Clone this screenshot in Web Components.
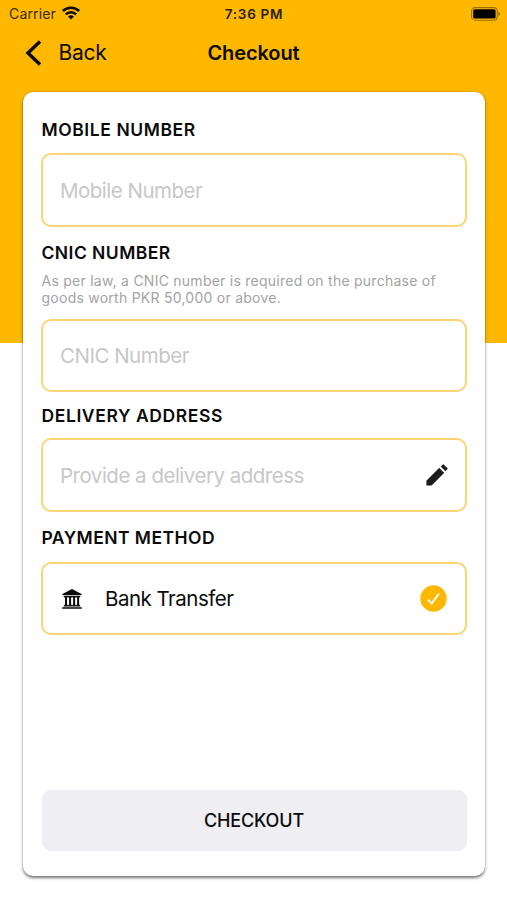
<!DOCTYPE html>
<html lang="en">
<head>
<meta charset="utf-8">
<title>Checkout</title>
<style>
    body {
        margin: 0;
        background: #fff;
        color: #0b0b0b;
        font-family: Inter, "Liberation Sans", sans-serif;
    }
</style>
</head>
<body>
<checkout-screen>
    <status-bar slot="header" carrier="Carrier" time="7:36 PM"></status-bar>
    <nav-header slot="header" back="Back">Checkout</nav-header>

    <form-field label="MOBILE NUMBER" style="--spacing: 0.58px">
        <text-box placeholder="Mobile Number" style="--nudge: 1px"></text-box>
    </form-field>
    <form-field label="CNIC NUMBER" style="--top: 14.5px">
        <span slot="hint">As per law, a CNIC number is required on the purchase of goods worth PKR 50,000 or above.</span>
        <text-box placeholder="CNIC Number"></text-box>
    </form-field>
    <form-field label="DELIVERY ADDRESS" style="--top: 12px; --gap: 12px; --spacing: 0.6px">
        <text-box placeholder="Provide a delivery address" style="--nudge: 1px"><app-icon name="pencil"></app-icon></text-box>
    </form-field>
    <form-field label="PAYMENT METHOD" style="--top: 14.5px">
        <payment-option>Bank Transfer</payment-option>
    </form-field>

    <submit-button slot="footer">CHECKOUT</submit-button>
</checkout-screen>

<script>
const ICONS = {
    wifi: `<svg width="18" height="14" viewBox="0 0 18 14" fill="none" stroke="#0b0b0b" stroke-width="2.6">
        <path d="M.9 5a11.6 11.6 0 0 1 16.2 0"/>
        <path d="M3.8 8.4a7.4 7.4 0 0 1 10.4 0"/>
        <path d="M9 13.6 6 10.6a4.3 4.3 0 0 1 6 0z" fill="#0b0b0b" stroke="none"/>
    </svg>`,
    battery: `<svg width="30" height="14" viewBox="0 0 30 14">
        <rect x=".6" y=".6" width="25.6" height="12.6" rx="3.4" fill="none" stroke="#000" stroke-opacity=".4" stroke-width="1.1"/>
        <rect x="2.2" y="2.2" width="22.4" height="9.4" rx="1.6" fill="#000"/>
        <path d="M27.4 4.8c2.4.9 2.4 3.3 0 4.2z" fill="#000" fill-opacity=".4"/>
    </svg>`,
    back: `<svg width="17" height="26" viewBox="0 0 17 26" fill="none" stroke="#0b0b0b" stroke-width="3.4">
        <path d="M15 1.6 3 13 15 24.4"/>
    </svg>`,
    pencil: `<svg width="22" height="22" viewBox="0 0 22 22" fill="#1d1d1f" stroke="#1d1d1f" stroke-width="1.2" stroke-linejoin="round">
        <path d="M1 21V16.8L13.2 4.6l4.2 4.2L5.2 21z"/>
        <path d="m15.6 2.6 1.7-1.7 3.8 3.8-1.7 1.7z"/>
    </svg>`,
    bank: `<svg width="20" height="20" viewBox="0 0 20 20" fill="#0b0b0b">
        <path d="M10 0 19.6 5v1.3H.4V5z"/>
        <path d="M1.8 7h16.4v1H1.8zM1.8 16.2h16.4v1.2H1.8zM.2 18.3h19.6v1.5H.2z"/>
        <path d="M2.4 7.5h3.2v.9l-.6.5v6.4l.6.6v.8H2.4v-.8l.6-.6V8.9l-.6-.5zM6.5 7.5h3.2v.9l-.6.5v6.4l.6.6v.8H6.5v-.8l.6-.6V8.9l-.6-.5zM10.5 7.5h3.2v.9l-.6.5v6.4l.6.6v.8h-3.2v-.8l.6-.6V8.9l-.6-.5zM14.5 7.5h3.2v.9l-.6.5v6.4l.6.6v.8h-3.2v-.8l.6-.6V8.9l-.6-.5z"/>
    </svg>`,
    check: `<svg width="27" height="27" viewBox="0 0 27 27" fill="none">
        <circle cx="13.5" cy="13.5" r="13.2" fill="#ffb800"/>
        <path d="m7.8 14.4 3.9 4.2 7.2-10" stroke="#fff" stroke-width="1.9"/>
    </svg>`
};

class AppIcon extends HTMLElement {
    connectedCallback() {
        this.attachShadow({ mode: 'open' });
        this.shadowRoot.innerHTML = `
            <style>
                :host { display: block; flex: none; }
                svg { display: block; }
            </style>
            ${ICONS[this.getAttribute('name')]}
        `;
    }
}

class StatusBar extends HTMLElement {
    connectedCallback() {
        this.attachShadow({ mode: 'open' });
        this.shadowRoot.innerHTML = `
            <style>
                :host {
                    display: grid;
                    grid-template-columns: 1fr auto 1fr;
                    align-items: center;
                    height: 27px;
                    padding: 0 6px 0 9px;
                    font-size: 14px;
                }
                .carrier {
                    display: flex;
                    align-items: center;
                    gap: 6px;
                    color: #3a2c05;
                    letter-spacing: 0.15px;
                }
                .carrier app-icon { margin-top: -2px; }
                .time {
                    font-weight: 600;
                    font-size: 13.5px;
                    color: #2a2005;
                    letter-spacing: 0.7px;
                    margin-right: 2px;
                }
                .battery { justify-self: end; }
            </style>
            <div class="carrier"><span>${this.getAttribute('carrier')}</span><app-icon name="wifi"></app-icon></div>
            <div class="time">${this.getAttribute('time')}</div>
            <app-icon class="battery" name="battery"></app-icon>
        `;
    }
}

class NavHeader extends HTMLElement {
    connectedCallback() {
        this.attachShadow({ mode: 'open' });
        this.shadowRoot.innerHTML = `
            <style>
                :host {
                    display: grid;
                    grid-template-columns: 1fr auto 1fr;
                    align-items: center;
                    height: 51px;
                    padding: 0 24px;
                }
                .back {
                    display: flex;
                    align-items: center;
                    gap: 16.5px;
                    margin-left: 1px;
                    font-size: 21px;
                    letter-spacing: -0.3px;
                }
                .title {
                    font-size: 20px;
                    font-weight: 600;
                    letter-spacing: -0.1px;
                }
            </style>
            <div class="back"><app-icon name="back"></app-icon><span>${this.getAttribute('back')}</span></div>
            <div class="title"><slot></slot></div>
        `;
    }
}

class CheckoutScreen extends HTMLElement {
    connectedCallback() {
        this.attachShadow({ mode: 'open' });
        this.shadowRoot.innerHTML = `
            <style>
                :host {
                    display: flex;
                    flex-direction: column;
                    box-sizing: border-box;
                    height: 900px;
                    background: linear-gradient(#ffb800 343px, #fff 343px);
                }
                .card {
                    flex: 1;
                    display: flex;
                    flex-direction: column;
                    margin: 13.5px 22px 24px 23px;
                    padding: 26px 18.5px 25px 18px;
                    border-radius: 10px;
                    background: #fff;
                    box-shadow: 0 1.5px 3px rgba(0, 0, 0, 0.55);
                }
                .footer { margin-top: auto; }
            </style>
            <slot name="header"></slot>
            <div class="card">
                <slot></slot>
                <div class="footer"><slot name="footer"></slot></div>
            </div>
        `;
    }
}

class FormField extends HTMLElement {
    connectedCallback() {
        this.attachShadow({ mode: 'open' });
        this.shadowRoot.innerHTML = `
            <style>
                :host {
                    display: block;
                    margin-top: var(--top, 0);
                }
                .label {
                    margin-bottom: var(--gap, 13.5px);
                    padding: 1px 0 0 0.5px;
                    font-size: 17.5px;
                    font-weight: 600;
                    line-height: 21px;
                    letter-spacing: var(--spacing, 0.45px);
                }
                ::slotted([slot="hint"]) {
                    display: block;
                    margin: -4.5px 0 12.5px;
                    padding-left: 0.5px;
                    color: #a3a3a3;
                    font-size: 14px;
                    line-height: 17px;
                    letter-spacing: 0.25px;
                }
            </style>
            <div class="label">${this.getAttribute('label')}</div>
            <slot name="hint"></slot>
            <slot></slot>
        `;
    }
}

class TextBox extends HTMLElement {
    connectedCallback() {
        this.attachShadow({ mode: 'open' });
        this.shadowRoot.innerHTML = `
            <style>
                :host {
                    display: flex;
                    align-items: center;
                    justify-content: space-between;
                    box-sizing: border-box;
                    height: 73.5px;
                    padding: var(--nudge, 0) 16.5px 0 17px;
                    border: 2px solid #fdd374;
                    border-radius: 10px;
                    color: #c7c7c9;
                    font-size: 20.5px;
                    letter-spacing: -0.5px;
                }
            </style>
            <span>${this.getAttribute('placeholder')}</span>
            <slot></slot>
        `;
    }
}

class PaymentOption extends HTMLElement {
    connectedCallback() {
        this.attachShadow({ mode: 'open' });
        this.shadowRoot.innerHTML = `
            <style>
                :host {
                    display: flex;
                    align-items: center;
                    box-sizing: border-box;
                    height: 73.5px;
                    padding: 0 18px 0 19px;
                    border: 2px solid #fdd374;
                    border-radius: 10px;
                    font-size: 20.5px;
                    letter-spacing: -0.5px;
                }
                .bank { margin-top: 1px; }
                .name {
                    flex: 1;
                    margin-left: 23px;
                }
            </style>
            <app-icon class="bank" name="bank"></app-icon>
            <span class="name"><slot></slot></span>
            <app-icon name="check"></app-icon>
        `;
    }
}

class SubmitButton extends HTMLElement {
    connectedCallback() {
        this.attachShadow({ mode: 'open' });
        this.shadowRoot.innerHTML = `
            <style>
                :host {
                    display: block;
                    padding-left: 0.5px;
                }
                button {
                    display: block;
                    width: 100%;
                    height: 61px;
                    padding: 0;
                    border: 0;
                    border-radius: 9px;
                    background: #efeef3;
                    color: #0b0b0b;
                    font: 500 18px Inter, "Liberation Sans", sans-serif;
                    letter-spacing: -0.15px;
                }
            </style>
            <button type="button"><slot></slot></button>
        `;
    }
}

customElements.define('app-icon', AppIcon);
customElements.define('status-bar', StatusBar);
customElements.define('nav-header', NavHeader);
customElements.define('checkout-screen', CheckoutScreen);
customElements.define('form-field', FormField);
customElements.define('text-box', TextBox);
customElements.define('payment-option', PaymentOption);
customElements.define('submit-button', SubmitButton);
</script>
</body>
</html>
